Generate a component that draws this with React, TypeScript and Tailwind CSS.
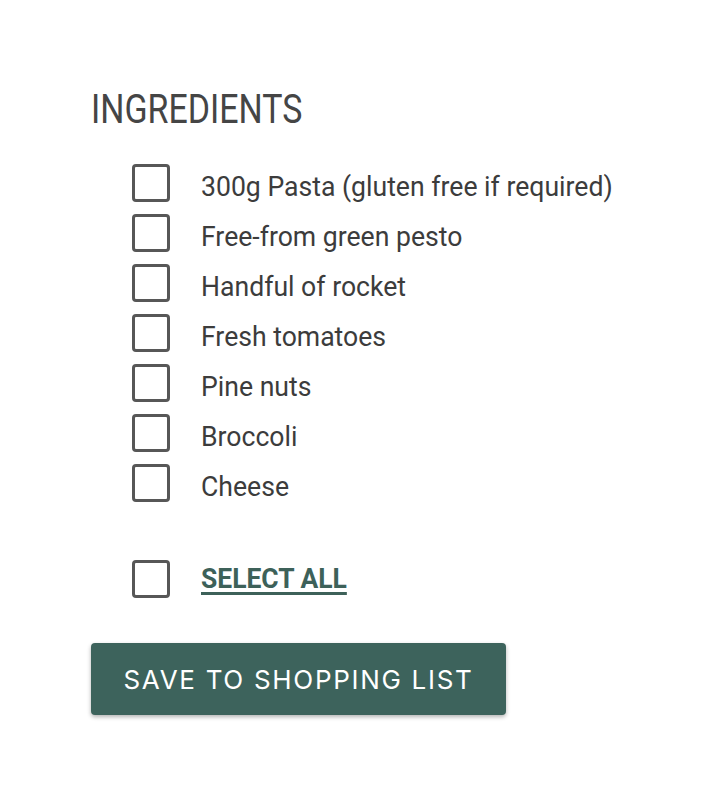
import React from "react";

const items = [
  "300g Pasta (gluten free if required)",
  "Free-from green pesto",
  "Handful of rocket",
  "Fresh tomatoes",
  "Pine nuts",
  "Broccoli",
  "Cheese",
];

function Box() {
  return <span className="block w-[38px] h-[38px] shrink-0 rounded-[4px] border-[3px] border-[#575757] bg-white" />;
}

export default function App() {
  return (
    <div className="min-h-[796px] w-[702px] bg-white pl-[91px] pt-[86px]" style={{ fontFamily: "Roboto, 'Liberation Sans', sans-serif" }}>
      <h2 className="text-[40px] leading-[48px] text-[#454545] font-normal">
        <span className="inline-block origin-left scale-x-[0.848] whitespace-nowrap">INGREDIENTS</span>
      </h2>
      <ul className="mt-[30px] ml-[41px] flex flex-col gap-[12px]">
        {items.map((t) => (
          <li key={t} className="flex items-center gap-[31px] h-[38px]">
            <Box />
            <span className="mt-[7px] inline-block origin-left scale-x-[0.95] whitespace-nowrap text-[28px] text-[#3c3c3c]">{t}</span>
          </li>
        ))}
      </ul>
      <div className="mt-[58px] ml-[41px] flex items-center gap-[31px] h-[38px]">
        <Box />
        <a href="#" className="inline-block origin-left scale-x-[0.944] whitespace-nowrap text-[28px] font-bold text-[#3d6159] underline underline-offset-[4px] decoration-[3px]">SELECT ALL</a>
      </div>
      <button className="mt-[45px] w-[415px] h-[72px] rounded-[4px] bg-[#3d635c] text-white text-[26px] tracking-[1.7px] shadow-[0_2px_4px_rgba(0,0,0,0.3)]" style={{ fontFamily: "Inter, 'Liberation Sans', sans-serif" }}>
        SAVE TO SHOPPING LIST
      </button>
    </div>
  );
}
